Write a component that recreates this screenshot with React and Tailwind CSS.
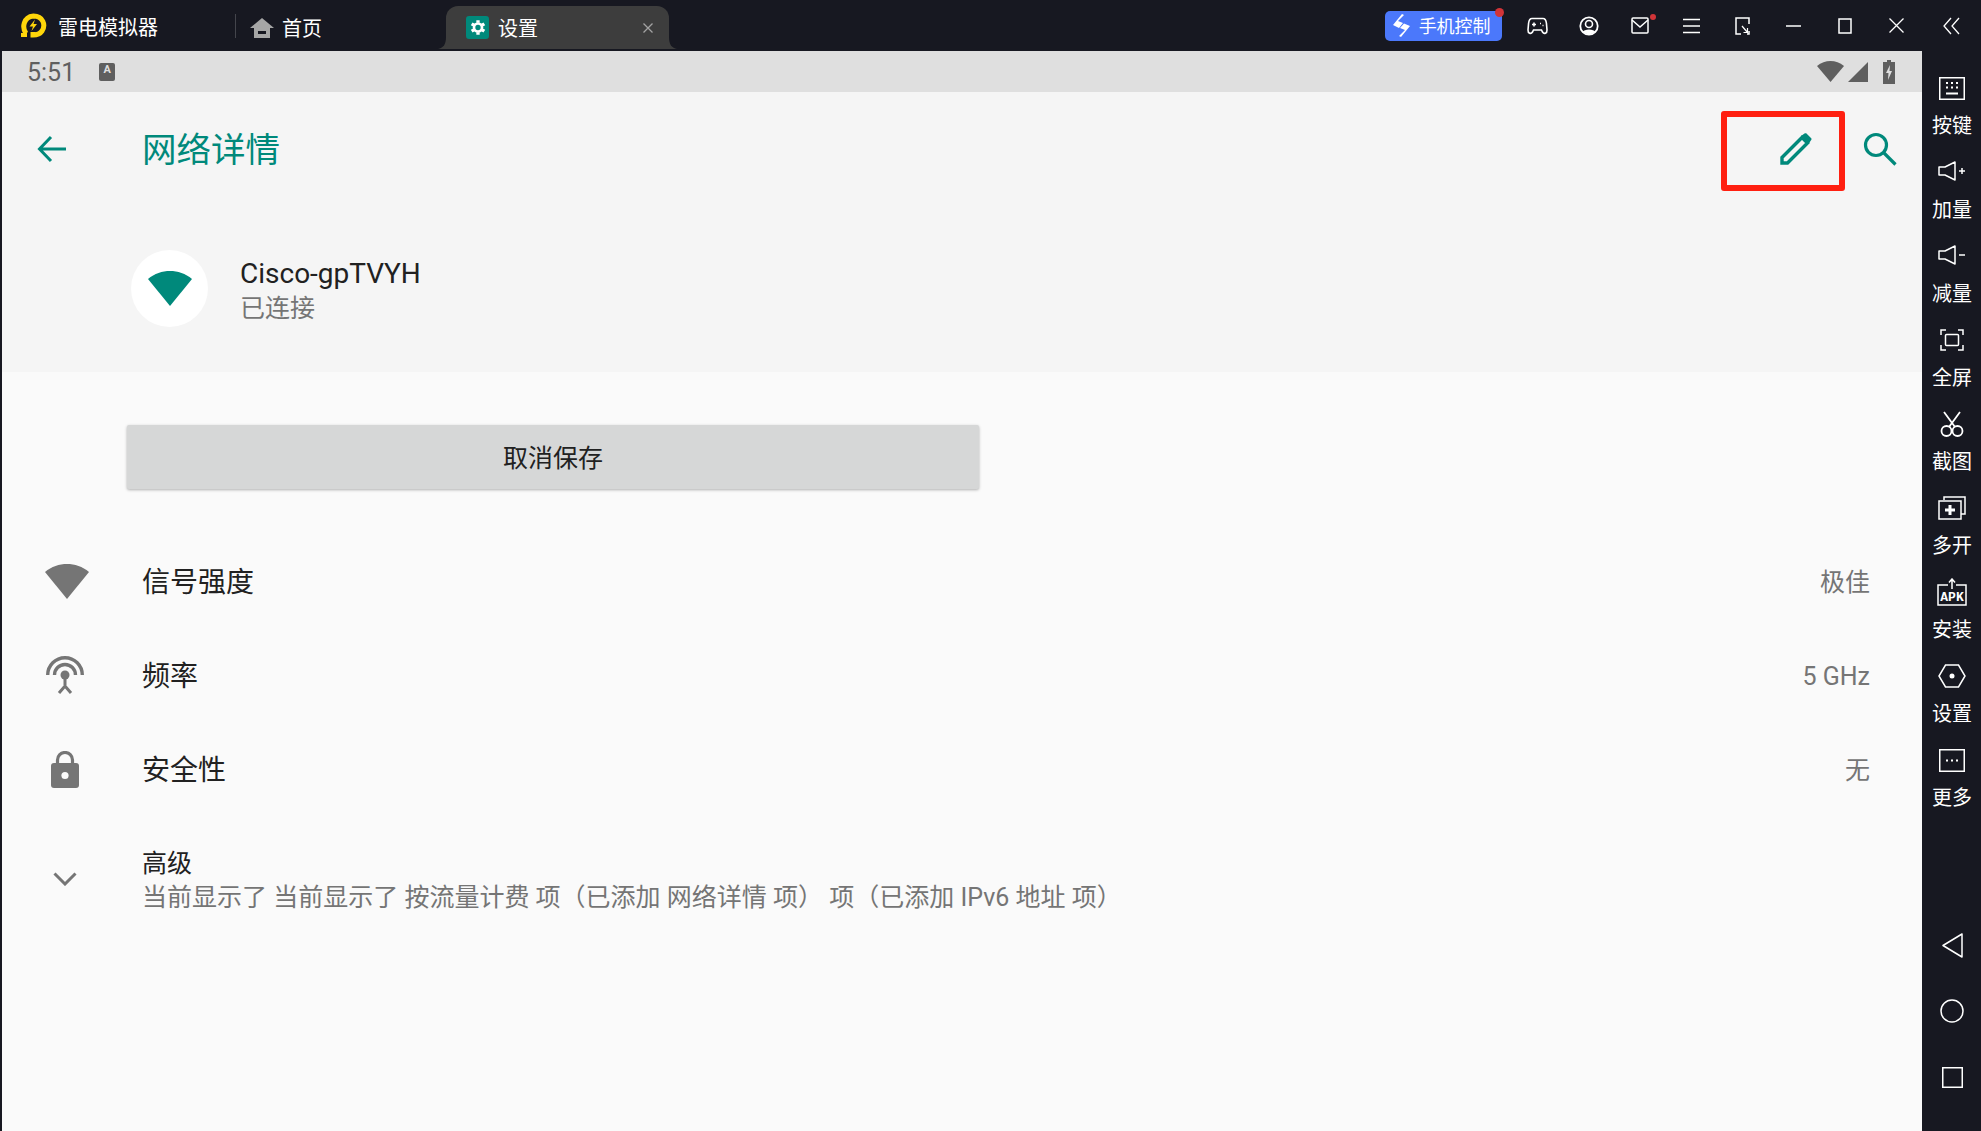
const CJK = "font-['Roboto','Noto_Sans_CJK_SC',sans-serif]";

function Logo() {
  return (
    <svg width="27" height="25" viewBox="0 0 27 25" fill="none">
      <path d="M6 20.5 C2 15 3 4 13.5 3 C23 3 26 12 22 18 C20 21 16 22 13 22 L13 19 " stroke="#ffd60a" strokeWidth="5" />
      <path d="M15 6.5 L9.5 13.5 H13 L11.5 18 L17 11 H13.5 Z" fill="#ffd60a" />
      <rect x="1" y="20" width="6" height="4" fill="#ffd60a" />
    </svg>
  );
}

function HomeIcon() {
  return (
    <svg width="24" height="20" viewBox="0 0 24 20" fill="#a6a6a6">
      <path d="M12 0 L24 10 H0 Z" />
      <path d="M4 10 H20 V20 H4 Z" />
      <rect x="8" y="13" width="8" height="3" fill="#171821" />
    </svg>
  );
}

function GearTab() {
  return (
    <div className="w-[23px] h-[23px] rounded-[3px] bg-[#00897b] flex items-center justify-center">
      <svg width="16" height="17" viewBox="0 0 24 24" fill="none" stroke="#fff">
        <circle cx="12" cy="12" r="6" strokeWidth="4" />
        <path d="M12 1 V5 M12 19 V23 M2.5 6.5 L6 8.5 M18 15.5 L21.5 17.5 M2.5 17.5 L6 15.5 M18 8.5 L21.5 6.5" strokeWidth="5" />
      </svg>
    </div>
  );
}

const topIcons = [
  <svg key="game" width="21" height="18" viewBox="0 0 21 18" fill="none" stroke="#fff" strokeWidth="1.6">
    <path d="M5 1.5 H16 C18 1.5 19 3 19.4 6 L20 13 C20.2 16.5 17 17.5 15.5 15 L14.5 13 H6.5 L5.5 15 C4 17.5 .8 16.5 1 13 L1.6 6 C2 3 3 1.5 5 1.5 Z" />
    <path d="M5 7.5 H9 M7 5.5 V9.5 M13 6.5 h1 M15.5 8.5 h1" />
  </svg>,
  <svg key="user" width="20" height="20" viewBox="0 0 20 20">
    <circle cx="10" cy="10" r="8.7" fill="none" stroke="#fff" strokeWidth="1.8" />
    <circle cx="10" cy="8" r="3.5" fill="none" stroke="#fff" strokeWidth="1.6" />
    <path d="M3.5 16 C5 12.5 15 12.5 16.5 16 L10 19 Z" fill="#fff" />
  </svg>,
  <div key="mail" className="relative">
    <svg width="18" height="17" viewBox="0 0 18 17" fill="none" stroke="#fff" strokeWidth="1.5">
      <rect x="1" y="1" width="16" height="15" rx="1" />
      <path d="M1 3 L9 10 L17 3" />
    </svg>
    <span className="absolute -top-[3px] -right-[7px] w-[6px] h-[6px] rounded-full bg-[#d13438]" />
  </div>,
  <svg key="menu" width="17" height="16" viewBox="0 0 17 16" stroke="#fff" strokeWidth="1.4">
    <path d="M0 1.5 H17 M0 8 H17 M0 14.5 H17" />
  </svg>,
  <svg key="rotate" width="15" height="18" viewBox="0 0 15 18" fill="none" stroke="#fff" strokeWidth="1.5">
    <path d="M6 17 H1 V1 H14 V7 M14 14 V17 H12" />
    <path d="M7 9 L12.5 15.5 M12.5 11 V15.5 H8.5" strokeWidth="1.2" />
  </svg>,
  <svg key="min" width="15" height="2" viewBox="0 0 15 2" stroke="#fff" strokeWidth="1.5">
    <path d="M0 1 H15" />
  </svg>,
  <svg key="max" width="14" height="16" viewBox="0 0 14 16" fill="none" stroke="#fff" strokeWidth="1.5">
    <rect x="1" y="1" width="12" height="14" />
  </svg>,
  <svg key="close" width="15" height="15" viewBox="0 0 15 15" stroke="#fff" strokeWidth="1.3">
    <path d="M.5 .5 L14.5 14.5 M14.5 .5 L.5 14.5" />
  </svg>,
];

function TopBar() {
  return (
    <div className="h-[51px] shrink-0 bg-[#171821] flex items-center text-white text-[20px]">
      <div className="ml-[20px]"><Logo /></div>
      <span className="ml-[11px] pt-[2px]">雷电模拟器</span>
      <div className="ml-[77px] w-px h-[24px] bg-[#44454c]" />
      <div className="ml-[14px] pt-[4px]"><HomeIcon /></div>
      <span className="ml-[8px] pt-[4px]">首页</span>
      <div className="relative ml-[124px] self-start mt-[6px] w-[223px] h-[43px] bg-[#3d3d3d] rounded-t-[12px] flex items-center pl-[20px]">
        <svg className="absolute left-[-8px] bottom-0" width="8" height="12" viewBox="0 0 8 12" fill="#3d3d3d">
          <path d="M8 0 V12 H0 C5 11 8 8 8 0 Z" />
        </svg>
        <svg className="absolute right-[-8px] bottom-0" width="8" height="12" viewBox="0 0 8 12" fill="#3d3d3d">
          <path d="M0 0 V12 H8 C3 11 0 8 0 0 Z" />
        </svg>
        <GearTab />
        <span className="ml-[9px]">设置</span>
        <svg className="absolute right-[16px] top-[17px]" width="10" height="10" viewBox="0 0 10 10" stroke="#a3a3a3" strokeWidth="1.3">
          <path d="M.5 .5 L9.5 9.5 M9.5 .5 L.5 9.5" />
        </svg>
      </div>
      <div className="ml-auto relative w-[117px] h-[30px] rounded-[5px] bg-[#4b78fb] flex items-center pl-[7px] text-[18px]">
        <svg width="19" height="24" viewBox="0 0 19 24" fill="#fff">
          <path d="M10 0 L1 11 L7 14 L11 9 L6 7 L12 1 Z" />
          <path d="M9 23 L18 12 L12 9.5 L8 14 L13 16 L7 22 Z" />
        </svg>
        <span className="ml-[8px]">手机控制</span>
        <span className="absolute -top-[3px] -right-[2px] w-[9px] h-[9px] rounded-full bg-[#d13438]" />
      </div>
      <div className="ml-[10px] flex items-center">
        {topIcons.map((icon, i) => (
          <div key={i} className="w-[51.3px] flex items-center justify-center">{icon}</div>
        ))}
      </div>
      <div className="w-[59px] flex justify-center">
        <svg width="17" height="18" viewBox="0 0 17 18" fill="none" stroke="#fff" strokeWidth="1.3">
          <path d="M8 1 L1 9 L8 17 M16 1 L9 9 L16 17" />
        </svg>
      </div>
    </div>
  );
}

function StatusBar() {
  return (
    <div className="h-[41px] bg-[#dfdfdf] flex items-center pl-[25px] text-[#5f5f5f]">
      <span className="text-[25px] pt-[3px] font-['Roboto',sans-serif]">5:51</span>
      <div className="ml-[24px] w-[16px] h-[18px] rounded-[2px] bg-[#5f5f5f] flex items-start justify-center">
        <span className="text-[11px] leading-[13px] font-bold text-[#dfdfdf] font-['Roboto',sans-serif]">A</span>
      </div>
      <div className="ml-auto mr-[27px] flex items-center">
        <svg width="27" height="21" viewBox="0 0 27 21" fill="#5f5f5f">
          <path d="M0 5 C8 -1.6 19 -1.6 27 5 L13.5 21 Z" />
        </svg>
        <svg className="ml-[4px]" width="20" height="20" viewBox="0 0 20 20" fill="#5f5f5f">
          <path d="M20 0 V20 H0 Z" />
        </svg>
        <svg className="ml-[15px]" width="12" height="24" viewBox="0 0 12 24">
          <path d="M4 0 H8 V2 H12 V24 H0 V2 H4 Z" fill="#5f5f5f" />
          <path d="M7 5 L3 13 H5.5 L5 20 L9 11 H6.5 Z" fill="#dfdfdf" />
        </svg>
      </div>
    </div>
  );
}

function Sector({ fill, className = "" }) {
  return (
    <svg className={className} width="44" height="35" viewBox="0 0 44 35" fill={fill}>
      <path d="M0 8 C13 -2.6 31 -2.6 44 8 L22 35 Z" />
    </svg>
  );
}

function AntennaIcon() {
  return (
    <svg width="38" height="38" viewBox="0 0 38 38" fill="none" stroke="#757575" strokeWidth="3.4">
      <path d="M1.7 19 A17.3 17.3 0 0 1 36.3 19" />
      <path d="M8.5 19 A10.5 10.5 0 0 1 29.5 19" />
      <circle cx="19" cy="19" r="4.5" fill="#757575" stroke="none" />
      <path d="M19 21 V29 M13 37 L19 30 L25 37" strokeWidth="3" />
    </svg>
  );
}

function LockIcon() {
  return (
    <svg width="28" height="37" viewBox="0 0 28 37">
      <path d="M6.5 13 V9 A7.5 7.5 0 0 1 21.5 9 V13" fill="none" stroke="#757575" strokeWidth="3.2" />
      <rect x="0" y="12" width="28" height="25" rx="3" fill="#757575" />
      <circle cx="14" cy="24.5" r="3.6" fill="#fafafa" />
    </svg>
  );
}

function DetailRow({ icon, label, value }) {
  return (
    <div className="h-[94px] flex items-center pr-[52px]">
      <div className="w-[126px] flex justify-center">{icon}</div>
      <span className="ml-[14px] pt-[4px] text-[28px] text-[#212121]">{label}</span>
      <span className="ml-auto pt-[4px] text-[25px] text-[#757575]">{value}</span>
    </div>
  );
}

function MainPanel() {
  return (
    <div className={`flex-1 border-l-2 border-[#171821] bg-[#fafafa] flex flex-col ${CJK}`}>
      <StatusBar />
      <div className="bg-[#f5f5f5] h-[280px] shrink-0">
        <div className="relative h-[112px] flex items-center pt-[2px]">
          <div className="w-[100px] flex justify-center">
            <svg width="30" height="28" viewBox="0 0 30 28" fill="none" stroke="#00897b" strokeWidth="3">
              <path d="M29 14 H3 M14 2 L2.5 14 L14 26" />
            </svg>
          </div>
          <h1 className="ml-[40px] pt-[3px] text-[34.5px] text-[#00897b]">网络详情</h1>
          <div className="ml-auto mr-[25px] flex items-center">
            <svg className="mr-[51px]" width="32" height="32" viewBox="0 0 32 32" fill="none">
              <path d="M2 30 V24.5 L22 4.5 L27.5 10 L7.5 30 Z" stroke="#00897b" strokeWidth="3.4" />
              <path d="M21 3 L24.5 .5 C25 0 26 0 26.5 .5 L31 5 C31.7 5.7 31.7 6.5 31 7.2 L28.5 11 Z" fill="#00897b" />
            </svg>
            <svg width="34" height="34" viewBox="0 0 34 34" fill="none" stroke="#00897b" strokeWidth="3.2">
              <circle cx="13" cy="13" r="10.5" />
              <path d="M21 21 L32.5 32.5" />
            </svg>
          </div>
          <div className="absolute left-[1719px] top-[19px] w-[124px] h-[80px] border-[6px] border-[#ff1f10] rounded-[3px]" />
        </div>
        <div className="flex items-center pt-[46px]">
          <div className="ml-[129px] w-[77px] h-[77px] rounded-full bg-white flex items-center justify-center">
            <Sector fill="#00897b" />
          </div>
          <div className="ml-[32px] pt-[5px] flex flex-col">
            <span className="text-[28px] leading-[34px] text-[#212121]">Cisco-gpTVYH</span>
            <span className="text-[25px] leading-[34px] mt-[1px] text-[#757575]">已连接</span>
          </div>
        </div>
      </div>
      <button className="mt-[53px] ml-[125px] w-[852px] h-[64px] pt-[3px] rounded-[2px] bg-[#d6d7d7] shadow-[0_1px_3px_rgba(0,0,0,0.3)] text-[25px] text-[#212121]">
        取消保存
      </button>
      <div className="mt-[45px]">
        <DetailRow icon={<Sector fill="#757575" className="ml-[4px]" />} label="信号强度" value="极佳" />
        <DetailRow icon={<AntennaIcon />} label="频率" value="5 GHz" />
        <DetailRow icon={<LockIcon />} label="安全性" value="无" />
      </div>
      <div className="flex items-center h-[94px] mt-[16px]">
        <div className="w-[126px] flex justify-center">
          <svg width="24" height="14" viewBox="0 0 24 14" fill="none" stroke="#757575" strokeWidth="3">
            <path d="M1.5 1.5 L12 12 L22.5 1.5" />
          </svg>
        </div>
        <div className="ml-[14px] pt-[4px] flex flex-col">
          <span className="text-[25px] leading-[34px] text-[#212121]">高级</span>
          <span className="text-[25px] leading-[34px] text-[#757575]">当前显示了 当前显示了 按流量计费 项（已添加 网络详情 项） 项（已添加 IPv6 地址 项）</span>
        </div>
      </div>
    </div>
  );
}

const white = { fill: "none", stroke: "#fff", strokeWidth: 1.5 };

const sideItems = [
  {
    label: "按键",
    icon: (
      <svg width="26" height="23" viewBox="0 0 26 23" {...white}>
        <rect x=".75" y=".75" width="24.5" height="21.5" />
        <path d="M7 6 h2 M12 6 h2 M17 6 h2 M7 10.5 h2 M12 10.5 h2 M17 10.5 h2 M7 16.5 H19" strokeWidth="2" />
      </svg>
    ),
  },
  {
    label: "加量",
    icon: (
      <svg className="-mt-[2px]" width="28" height="20" viewBox="0 0 28 20" {...white}>
        <path d="M1 6 H7 L17 1 V19 L7 14 H1 Z" strokeLinejoin="round" />
        <path d="M21 10 H27 M24 7 V13" />
      </svg>
    ),
  },
  {
    label: "减量",
    icon: (
      <svg className="-mt-[2px]" width="28" height="20" viewBox="0 0 28 20" {...white}>
        <path d="M1 6 H7 L17 1 V19 L7 14 H1 Z" strokeLinejoin="round" />
        <path d="M21 10 H27" />
      </svg>
    ),
  },
  {
    label: "全屏",
    icon: (
      <svg width="24" height="22" viewBox="0 0 24 22" {...white}>
        <path d="M1 6 V1 H6 M18 1 H23 V6 M1 16 V21 H6 M18 21 H23 V16" />
        <rect x="5.5" y="5.5" width="13" height="11" rx="1" />
      </svg>
    ),
  },
  {
    label: "截图",
    icon: (
      <svg width="24" height="26" viewBox="0 0 24 26" {...white} strokeWidth="1.8">
        <path d="M4 1 L15 16 M20 1 L9 16" />
        <circle cx="6.5" cy="20" r="5" />
        <circle cx="17.5" cy="20" r="5" />
      </svg>
    ),
  },
  {
    label: "多开",
    icon: (
      <svg width="28" height="24" viewBox="0 0 28 24" {...white}>
        <path d="M6 4 V1 H27 V18 H23" />
        <rect x="1" y="5" width="22" height="18" />
        <path d="M12 9 V19 M7 14 H17" strokeWidth="3" />
      </svg>
    ),
  },
  {
    label: "安装",
    icon: (
      <svg width="30" height="28" viewBox="0 0 30 28" {...white}>
        <path d="M11 7 H1 V27 H29 V7 H19 M15 11 V2 M12 4.5 L15 1 L18 4.5" />
        <text x="15" y="23" textAnchor="middle" fontSize="13" fontWeight="700" fill="#fff" stroke="none" fontFamily="'Liberation Mono', monospace">APK</text>
      </svg>
    ),
  },
  {
    label: "设置",
    icon: (
      <svg width="28" height="24" viewBox="0 0 28 24" {...white}>
        <path d="M7.5 1 H20.5 L27 12 L20.5 23 H7.5 L1 12 Z" />
        <circle cx="14" cy="12" r="2.5" fill="#fff" stroke="none" />
      </svg>
    ),
  },
  {
    label: "更多",
    icon: (
      <svg width="26" height="23" viewBox="0 0 26 23" {...white}>
        <rect x=".75" y=".75" width="24.5" height="21.5" />
        <path d="M7 11.5 h2 M12 11.5 h2 M17 11.5 h2" strokeWidth="2" />
      </svg>
    ),
  },
];

function Sidebar() {
  return (
    <div className="w-[59px] shrink-0 bg-[#171821] flex flex-col items-center text-white text-[20px] pt-[22px] pl-[1px] font-['Noto_Sans_CJK_SC',sans-serif]">
      {sideItems.map((item) => (
        <div key={item.label} className="h-[84px] flex flex-col items-center">
          <div className="h-[30px] flex items-center justify-center">{item.icon}</div>
          <span className="leading-[28px] mt-[8px]">{item.label}</span>
        </div>
      ))}
      <div className="mt-auto mb-[43px] flex flex-col items-center">
        <svg className="mb-[41px]" width="21" height="25" viewBox="0 0 21 25" {...white}>
          <path d="M1 12.5 L20 1 V24 Z" strokeLinejoin="round" />
        </svg>
        <svg className="mb-[44px]" width="24" height="24" viewBox="0 0 24 24" {...white}>
          <circle cx="12" cy="12" r="11" />
        </svg>
        <svg width="21" height="21" viewBox="0 0 21 21" {...white}>
          <rect x=".75" y=".75" width="19.5" height="19.5" />
        </svg>
      </div>
    </div>
  );
}

export default function App() {
  return (
    <div className="w-[1981px] h-[1131px] flex flex-col overflow-hidden font-['Noto_Sans_CJK_SC',sans-serif]">
      <TopBar />
      <div className="flex-1 flex min-h-0">
        <MainPanel />
        <Sidebar />
      </div>
    </div>
  );
}
